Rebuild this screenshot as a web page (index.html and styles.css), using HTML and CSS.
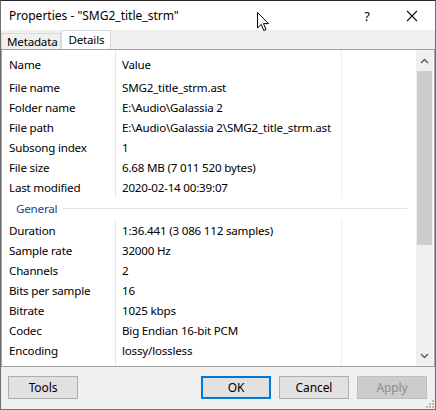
FILE: index.html
```html
<!DOCTYPE html>
<html>
<head>
<meta charset="utf-8">
<link rel="stylesheet" href="styles.css">
</head>
<body>
<div class="window">
  <div class="titlebar">
    <div class="title">Properties - "SMG2_title_strm"</div>
    <div class="help">?</div>
    <div class="close">
      <svg width="12" height="12" viewBox="0 0 12 12"><path d="M1 1 L11 11 M11 1 L1 11" stroke="#111" stroke-width="1.1" fill="none"/></svg>
    </div>
  </div>
  <div class="tabs">
    <div class="tab">Metadata</div>
    <div class="tab active">Details</div>
  </div>
  <div class="list">
    <div class="rows">
      <div class="row header"><span class="c1">Name</span><span class="c2">Value</span></div>
      <div class="row"><span class="c1">File name</span><span class="c2">SMG2_title_strm.ast</span></div>
      <div class="row"><span class="c1">Folder name</span><span class="c2">E:\Audio\Galassia 2</span></div>
      <div class="row"><span class="c1">File path</span><span class="c2">E:\Audio\Galassia 2\SMG2_title_strm.ast</span></div>
      <div class="row"><span class="c1">Subsong index</span><span class="c2">1</span></div>
      <div class="row"><span class="c1">File size</span><span class="c2">6.68 MB (7 011 520 bytes)</span></div>
      <div class="row"><span class="c1">Last modified</span><span class="c2">2020-02-14 00:39:07</span></div>
      <div class="group"><span class="gname">General</span><span class="gline"></span></div>
      <div class="row"><span class="c1">Duration</span><span class="c2">1:36.441 (3 086 112 samples)</span></div>
      <div class="row"><span class="c1">Sample rate</span><span class="c2">32000 Hz</span></div>
      <div class="row"><span class="c1">Channels</span><span class="c2">2</span></div>
      <div class="row"><span class="c1">Bits per sample</span><span class="c2">16</span></div>
      <div class="row"><span class="c1">Bitrate</span><span class="c2">1025 kbps</span></div>
      <div class="row"><span class="c1">Codec</span><span class="c2">Big Endian 16-bit PCM</span></div>
      <div class="row"><span class="c1">Encoding</span><span class="c2">lossy/lossless</span></div>
    </div>
    <div class="scrollbar">
      <div class="arrow">
        <svg width="9" height="6" viewBox="0 0 9 6"><path d="M1 5 L4.5 1.5 L8 5" stroke="#606060" stroke-width="1.5" fill="none"/></svg>
      </div>
      <div class="track"><div class="thumb"></div></div>
      <div class="arrow">
        <svg width="9" height="6" viewBox="0 0 9 6"><path d="M1 1 L4.5 4.5 L8 1" stroke="#606060" stroke-width="1.5" fill="none"/></svg>
      </div>
    </div>
  </div>
  <div class="footer">
    <button class="btn">Tools</button>
    <div class="spacer"></div>
    <button class="btn default">OK</button>
    <button class="btn">Cancel</button>
    <button class="btn disabled">Apply</button>
  </div>
  <svg class="grip" width="10" height="10" viewBox="0 0 10 10">
    <rect x="8" y="2" width="2" height="2" fill="#b8b8b8"/>
    <rect x="5" y="5" width="2" height="2" fill="#b8b8b8"/>
    <rect x="8" y="5" width="2" height="2" fill="#b8b8b8"/>
    <rect x="2" y="8" width="2" height="2" fill="#b8b8b8"/>
    <rect x="5" y="8" width="2" height="2" fill="#b8b8b8"/>
    <rect x="8" y="8" width="2" height="2" fill="#b8b8b8"/>
  </svg>
  <svg class="cursor" width="13" height="20" viewBox="0 0 13 20">
    <path d="M0.5 0.5 L0.5 16 L4.2 12.4 L6.8 18.5 L9 17.6 L6.5 11.6 L11.5 11.6 Z" fill="#fff" stroke="#000" stroke-width="1" stroke-linejoin="miter"/>
  </svg>
</div>
</body>
</html>
```

FILE: styles.css
```css
* { box-sizing: border-box; }
html, body { margin: 0; padding: 0; }
body {
  width: 436px;
  height: 410px;
  overflow: hidden;
  font-family: "Noto Sans", "Open Sans", sans-serif;
  font-size: 11.6px;
  letter-spacing: -0.2px;
  color: #000;
  background: #f0f0f0;
}
.window {
  position: relative;
  width: 436px;
  height: 410px;
  border: 1px solid #6e6e6e;
  border-top-color: #2b2b2b;
  display: flex;
  flex-direction: column;
  background: #f0f0f0;
}
.titlebar {
  height: 29px;
  background: #fff;
  display: flex;
  align-items: center;
  padding-left: 8px;
  flex: none;
}
.title { flex: 1; font-size: 12px; letter-spacing: 0; }
.help {
  width: 40px;
  text-align: center;
  font-size: 13px;
  margin-right: 2px;
}
.close {
  width: 46px;
  display: flex;
  justify-content: center;
  align-items: center;
}
.tabs {
  height: 19px;
  display: flex;
  align-items: flex-end;
  padding-left: 0;
  flex: none;
}
.tab {
  height: 16px;
  padding: 0 3px 0 5px;
  line-height: 15px;
  border: 1px solid #d9d9d9;
  border-bottom: none;
  background: #f0f0f0;
}
.tab.active {
  height: 19px;
  background: #fff;
  padding: 0 6px 0 6px;
  line-height: 17px;
  border-left: 1px solid #d9d9d9;
}
.list {
  height: 318px;
  border: 1px solid #a0a0a0;
  background: #fff;
  display: flex;
  flex: none;
}
.rows {
  flex: 1;
  background-image:
    linear-gradient(#e5e5e5, #e5e5e5),
    linear-gradient(#eeeeee, #eeeeee);
  background-size: 1px 100%, 1px 100%;
  background-position: 113px 0, 339px 0;
  background-repeat: no-repeat;
}
.row {
  height: 20px;
  display: flex;
  align-items: center;
  white-space: nowrap;
}
.row.header { height: 27px; padding-top: 2px; }
.c1 { width: 114px; padding-left: 7px; }
.c2 { padding-left: 6px; }
.group {
  height: 23px;
  display: flex;
  align-items: center;
  padding-left: 14px;
  padding-right: 9px;
  background: #fff;
}
.gname { color: #1e3d8f; margin-right: 6px; }
.gline { flex: 1; height: 1px; background: #e2e2e2; }
.scrollbar {
  width: 17px;
  background: #f0f0f0;
  display: flex;
  flex-direction: column;
  margin-right: 1px;
}
.arrow {
  height: 21px;
  display: flex;
  align-items: center;
  justify-content: center;
}
.track { flex: 1; }
.thumb { height: 174px; background: #cdcdcd; margin: 0 1px; }
.footer {
  flex: 1;
  display: flex;
  align-items: flex-start;
  padding: 9px 8px 0 7px;
  gap: 8px;
}
.spacer { flex: 1; }
.btn {
  width: 70px;
  height: 23px;
  font-family: inherit;
  font-size: 12px;
  letter-spacing: -0.1px;
  color: #000;
  background: #e1e1e1;
  border: 1px solid #adadad;
  padding: 0;
  margin: 0;
}
.btn.default { border: 2px solid #0078d7; }
.btn.disabled { background: #cccccc; border-color: #bfbfbf; color: #8c8c8c; }
.grip { position: absolute; right: 1px; bottom: 1px; }
.cursor { position: absolute; left: 256px; top: 11px; }
```
